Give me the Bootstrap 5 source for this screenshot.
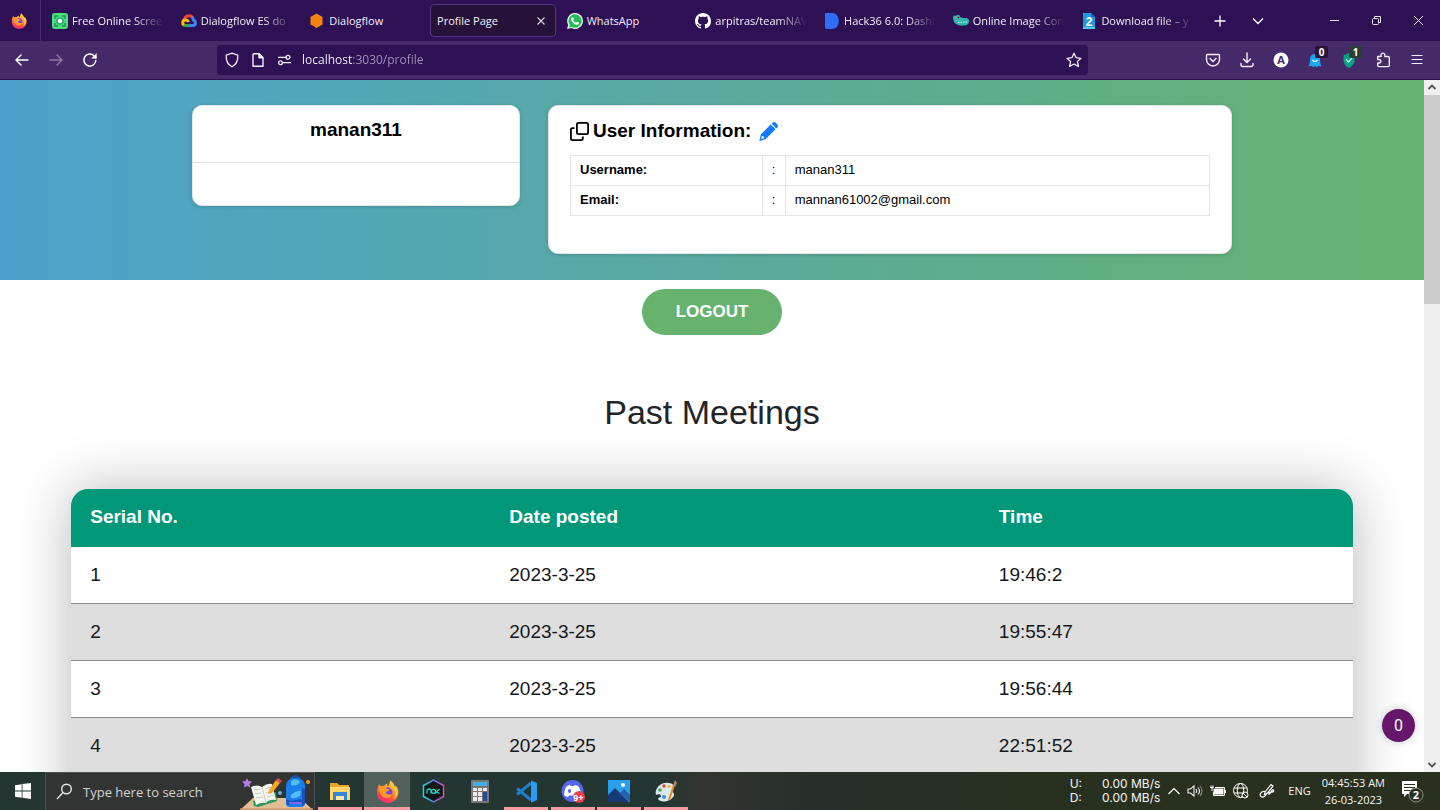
<!DOCTYPE html>
<html lang="en">
<head>
<meta charset="utf-8">
<meta name="viewport" content="width=device-width, initial-scale=1">
<title>Profile Page</title>
<link href="https://cdn.jsdelivr.net/npm/bootstrap@5.3.0/dist/css/bootstrap.min.css" rel="stylesheet">
<style>
  :root { --ui: "Open Sans", "Noto Sans", sans-serif; --page: "Liberation Sans", Arial, sans-serif; }
  body { font-family: var(--page); background: #fff; }
  svg { display: block; flex: none; }
  button { padding: 0; border: 0; background: none; color: inherit; }

  /* browser chrome */
  .tab-strip { height: 41px; background: #2e1155; color: #f3eef8; font: 11px/16px var(--ui); }
  .pinned { flex: none; width: 41px; padding-right: 3px; border-right: 1px solid #452a69; }
  .tab-list { flex: 0 1 1160px; min-width: 0; padding-left: 2px; }
  .tab { flex: 1 1 0; padding: 4px 2px 4px 1px; min-width: 0; }
  .tab-face { height: 33px; padding: 0 0 0 7px; gap: 4px; width: 100%; border: 1px solid transparent; border-radius: 4px; }
  .tab-face.active { background: #261238; border-color: #55348a; padding: 0 6px; }
  .tab-title { flex: 1 1 0; white-space: nowrap; text-align: left; }
  .faded { -webkit-mask-image: linear-gradient(90deg, #000 62px, transparent 92px); mask-image: linear-gradient(90deg, #000 62px, transparent 92px); }
  .window-buttons { gap: 31px; padding-right: 16px; }
  .toolbar { height: 39px; background: #452a69; color: #f3eef8; border-bottom: 1px solid #2e1155; }
  .nav-buttons { width: 217px; padding-left: 14px; gap: 18px; }
  .url-box { flex: 0 1 871px; height: 30px; margin-top: 4px; background: #2e1155; border-radius: 4px; padding: 0 6px 0 7px; gap: 10px; }
  .url-input { flex: 1 1 0; min-width: 0; border: 0; outline: 0; padding: 0; font: 12px/20px var(--ui); color: transparent;
    background: linear-gradient(90deg, #fbfaff 51px, #a594ba 51px); -webkit-background-clip: text; background-clip: text; }
  .tool-buttons { gap: 16px; padding-right: 14px; }
  .tool-buttons button { position: relative; }
  .count { position: absolute; top: -5px; right: -4px; width: 13px; height: 12px; border-radius: 2px; background: #2a1536; color: #fff; font: bold 10px/12px var(--ui); text-align: center; }
  .count.green { background: #293f36; }

  /* page */
  .viewport { flex: 1 1 0; min-height: 0; }
  .page { flex: 1 1 0; min-width: 0; overflow: hidden; position: relative; }
  .hero { min-height: 200px; padding: 25px 0; background: linear-gradient(90deg, #4ca2cd, #67b26f); }
  .hero .container-fluid { padding: 0 14px; }
  .hero .row { --bs-gutter-x: 28px; }
  .panel { background: #fff; border: 1px solid #e3e6e6; border-radius: 10px; box-shadow: 0 1px 4px rgba(0,0,0,.14); color: #000; }
  .panel h1, .panel h2 { font-size: 19px; line-height: 24px; font-weight: bold; margin: 0; }
  .name-head { height: 57px; padding-top: 12px; border-bottom: 1px solid #e4e5e6; }
  .name-body { height: 42px; }
  .info { height: 149px; padding: 13px 21px; }
  .info-table { font-size: 13px; line-height: 20px; margin: 12px 0 0; border-color: #e4e5e6; }
  .info-table > tbody > tr > * { padding: 4px 9px 5px; color: #000; }
  .logout { margin-top: 9px; width: 140px; height: 46px; border-radius: 23px; background: #67b26f; color: #fff; font-weight: bold; font-size: 17px; line-height: 24px; }
  .section-title { font-size: 34px; line-height: 40px; margin: 57px 0; color: #212529; font-weight: 400; }
  .meetings { width: 90%; margin: 0 auto; border-radius: 17px; overflow: hidden; box-shadow: 0 0 56px rgba(0,0,0,.28); font-size: 19px; line-height: 24px; color: #151719; border-collapse: collapse; background: #fff; table-layout: fixed; }
  .meetings th, .meetings td { padding: 16px 19px; }
  .meetings thead th { background: #009879; color: #fff; padding-bottom: 18px; }
  .meetings tbody tr { border-bottom: 1px solid #8c8c8c; }
  .meetings tbody tr:nth-child(even) { background: #dedede; }
  .meetings tbody tr:last-child td { padding-bottom: 96px; }
  .chat { position: absolute; right: 9px; bottom: 30px; width: 33px; height: 33px; border-radius: 50%; background: #66166b; color: #fff; font: 16px/33px Roboto, sans-serif; box-shadow: 0 0 8px rgba(0,0,0,.2); }
  .scroll-track { width: 16px; background: #f0f0f0; }
  .scroll-thumb { height: 209px; background: #cdcdcd; }

  /* taskbar */
  .taskbar { height: 38px; background: linear-gradient(90deg, #243632 46%, #33352f 49%, #243029 56%, #27301f 72%, #29301f); color: #f5f5f5; font-family: var(--ui); }
  .start { width: 45px; }
  .search { width: 270px; background: #323433; border: 1px solid #4a5150; border-bottom: 0; padding-left: 10px; gap: 10px; }
  .search input { flex: 1 1 0; min-width: 0; border: 0; outline: 0; padding: 0; background: none; font: 13px/20px var(--ui); color: #fff; }
  .search input::placeholder { color: #d2d2d2; opacity: 1; }
  .apps { padding-left: 2px; }
  .app { width: 46px; margin-right: 1px; border-bottom: 3px solid transparent; padding: 3px 0 0; display: flex; justify-content: center; align-items: center; }
  .apps .app:nth-child(2n) { margin-right: 0; }
  .app.open { border-image: linear-gradient(90deg, transparent 4px, #f79aa2 4px, #f79aa2 42px, transparent 42px) 3; }
  .app.current { background: #53615d; border-bottom-color: #f79aa2; }
  .tray { font-size: 11px; line-height: 14px; white-space: nowrap; }
  .tray-icons { gap: 7px; }
  .pen { margin: 0 13px 0 3px; }
  .speed { font: 12px/14px Inter, sans-serif; gap: 20px; }
  .clock { line-height: 17px; text-align: center; margin: 0 16px 0 11px; }
</style>
</head>
<body class="vh-100 d-flex flex-column overflow-hidden">

<svg width="0" height="0" class="position-absolute" aria-hidden="true">
  <defs>
    <linearGradient id="ffg" x1=".8" y1="0" x2=".3" y2="1"><stop offset="0" stop-color="#ffe14a"/><stop offset=".45" stop-color="#ff9328"/><stop offset=".8" stop-color="#ff3e50"/><stop offset="1" stop-color="#e6318a"/></linearGradient>
    <linearGradient id="nxg"><stop offset="0" stop-color="#24d8c4"/><stop offset=".6" stop-color="#6f6ae8"/><stop offset="1" stop-color="#e247a9"/></linearGradient>
  </defs>
  <symbol id="firefox" viewBox="0 0 24 24">
    <path fill="url(#ffg)" d="M3.500 4.500c.5 1.200 1.200 1.800 2 2 .8-.5 2-.6 3-.5C9.800 4.700 11 4 12 4c-.5 1-.3 2 .5 2.500C14 5 14.500 2.500 14.600.5c2.900 1.500 4.400 4 4.900 6.200.7.200 1-.4 1-1 2 2.300 3 5 2.900 7.600C23.200 19.300 18.300 24 12.200 24 5.800 24 1 19 1 12.900c0-3.200.8-6.100 2.500-8.400z"/>
    <circle cx="12" cy="13" r="5.200" fill="#7a49d6"/>
    <path fill="#ff9a2b" d="M3 8c3-1.800 6-1 7.500.6 1 .9 2.500.8 3.500 1.100-.3 1.600-2.100 1.800-3.200 2.700-.7.600-.4 1.700.5 2.300 2 1.200 4-.4 5.500.4-1 3-4.500 4.300-7.800 3.100C5 16.800 3.300 12.500 3 8z"/>
    <path fill="#ffcf3d" d="M15 2c.5 3 4.500 5.500 5.300 9.500.7 3.400-.6 6.500-2.300 8 4.500-1.500 5.800-8.500 2.700-12.500l-1.200 1C18.500 5.500 16.800 3.500 15 2z"/>
  </symbol>
</svg>

<header>
  <div class="tab-strip d-flex">
    <button class="pinned d-flex align-items-center justify-content-center" aria-label="Firefox View"><svg width="16" height="16"><use href="#firefox"/></svg></button>
    <div class="tab-list d-flex" role="tablist">
      <div class="tab"><button role="tab" class="tab-face d-flex align-items-center"><svg width="16" height="16" viewBox="0 0 16 16"><rect width="16" height="16" rx="3" fill="#4ae07e"/><path d="M3 6V3h3M10 3h3v3M13 10v3h-3M6 13H3v-3" fill="none" stroke="#1b9350" stroke-width="1.400"/><circle cx="8" cy="8" r="3.800" fill="#2da861"/><circle cx="8" cy="8" r="2.300" fill="#fff"/></svg><span class="tab-title faded">Free Online Scree</span></button></div>
      <div class="tab"><button role="tab" class="tab-face d-flex align-items-center"><svg width="16" height="16" viewBox="0 0 16 16" fill="none" stroke-width="3"><path d="M3.300 6.500C4 3.700 6 2.800 8 2.800c1.500 0 2.800.7 3.600 1.700" stroke="#ea4335"/><path d="M11 4c1 1 1.400 2 1.500 3.200 2.600.8 2.600 5.300-.5 5.300H8" stroke="#4285f4"/><path d="M8.500 12.500H4.500c-1 0-1.500-.3-2-.8" stroke="#34a853"/><path d="M3 12C1 10.500 1.200 7 4.500 7c1.600 0 2.500.8 3 2" stroke="#fbbc05"/></svg><span class="tab-title faded">Dialogflow ES do</span></button></div>
      <div class="tab"><button role="tab" class="tab-face d-flex align-items-center"><svg width="16" height="16" viewBox="0 0 16 16"><path fill="#f58410" d="M7.500 0.500L13.500 4v7.500L7.500 15v.5L5.500 13.500 1.500 11.500V4z"/></svg><span class="tab-title">Dialogflow</span></button></div>
      <div class="tab"><div class="tab-face active d-flex align-items-center"><button role="tab" aria-selected="true" class="tab-title">Profile Page</button><button aria-label="Close tab"><svg width="16" height="16" viewBox="0 0 16 16" stroke="#ddd4e8" stroke-width="1.100"><path d="M4.500 4.500l7 7M11.500 4.500l-7 7"/></svg></button></div></div>
      <div class="tab"><button role="tab" class="tab-face d-flex align-items-center"><svg width="16" height="16" viewBox="0 0 16 16"><path fill="#e9f5ec" d="M8 0a8 8 0 1 1-3.700 15.100L0 16l1.200-4A8 8 0 0 1 8 0z"/><path fill="#20bd58" d="M8 1.300a6.700 6.700 0 1 1-3.400 12.500l-2.600.6.800-2.500A6.700 6.700 0 0 1 8 1.300z"/><path fill="#fff" d="M5.300 4.200h.9l.8 2-.8 1.100c.7 1.200 1.500 1.900 2.800 2.500l1-1.100 1.900.9c.2 1.600-1.100 2.400-2.200 2.200C6.900 11.300 4.800 9 4.200 6.700c-.2-1 .3-2.100 1.100-2.500z"/></svg><span class="tab-title">WhatsApp</span></button></div>
      <div class="tab"><button role="tab" class="tab-face d-flex align-items-center"><svg width="16" height="16" viewBox="0 0 16 16" fill="#fff"><path d="M8 0C3.580 0 0 3.580 0 8c0 3.540 2.290 6.530 5.470 7.590.4.070.55-.17.55-.38 0-.19-.01-.82-.01-1.490-2.010.37-2.530-.49-2.690-.94-.09-.23-.48-.94-.82-1.130-.28-.15-.68-.52-.01-.53.63-.01 1.080.58 1.230.82.72 1.210 1.870.87 2.330.66.070-.52.28-.87.510-1.070-1.780-.2-3.640-.89-3.640-3.950 0-.87.31-1.590.82-2.150-.08-.2-.36-1.020.08-2.120 0 0 .67-.21 2.200.82.640-.18 1.320-.27 2-.27s1.360.09 2 .27c1.530-1.040 2.200-.82 2.200-.82.440 1.100.16 1.920.08 2.120.51.56.82 1.270.82 2.150 0 3.070-1.870 3.750-3.650 3.950.29.25.54.73.54 1.480 0 1.070-.01 1.930-.01 2.200 0 .21.15.46.55.38A8 8 0 0 0 16 8c0-4.420-3.580-8-8-8z"/></svg><span class="tab-title faded">arpitras/teamNAV</span></button></div>
      <div class="tab"><button role="tab" class="tab-face d-flex align-items-center"><svg width="16" height="16" viewBox="0 0 16 16"><path fill="#2f6df6" d="M1 0h7c9 0 9 16 0 16H3q-2 0-2-2z"/></svg><span class="tab-title faded">Hack36 6.0: Dashb</span></button></div>
      <div class="tab"><button role="tab" class="tab-face d-flex align-items-center"><svg width="16" height="16" viewBox="0 0 16 16"><path fill="#30b6ae" d="M0 4.500C0 2 2 2 3 3c1-2 4-1.500 4 1 2 1 4 1 6 1 3 0 4 4 2 6-2 2-8 2-12 0C1 10 0 7 0 4.500z"/><path d="M5 9.500l9-.6" stroke="#d7f6f0" stroke-dasharray="1.500 1"/><circle cx="3" cy="4.200" r="1" fill="#e96a73"/><circle cx="5.500" cy="4.500" r=".8" fill="#123"/></svg><span class="tab-title faded">Online Image Con</span></button></div>
      <div class="tab"><button role="tab" class="tab-face d-flex align-items-center"><svg width="16" height="16" viewBox="0 0 16 16"><path fill="#1b9adf" d="M2 0h8l4 4v12H2z"/><path fill="#1765b8" d="M10 0v4h4z"/><path fill="#58c9f2" d="M2 14h12v2H2z"/><text x="8" y="12.500" text-anchor="middle" font-size="12" font-weight="bold" fill="#fff" font-family="Liberation Sans">2</text></svg><span class="tab-title faded">Download file – y</span></button></div>
    </div>
    <div class="d-flex align-items-center gap-4 ps-2 ms-1">
      <button aria-label="New tab"><svg width="14" height="14" viewBox="0 0 14 14" stroke="#fff" stroke-width="1.300"><path d="M7 1.500v11M1.500 7h11"/></svg></button>
      <button aria-label="List all tabs"><svg width="14" height="14" viewBox="0 0 14 14" fill="none" stroke="#fff" stroke-width="1.300"><path d="M2 4.500l5 5 5-5"/></svg></button>
    </div>
    <div class="window-buttons d-flex align-items-center ms-auto">
      <button aria-label="Minimize"><svg width="11" height="11" viewBox="0 0 11 11" stroke="#e8e2ef"><path d="M1 5.500h9"/></svg></button>
      <button aria-label="Restore"><svg width="11" height="11" viewBox="0 0 11 11" fill="none" stroke="#e8e2ef"><rect x="1.500" y="3.500" width="6" height="6" rx="1"/><path d="M3.500 3V1.500h6v6H8"/></svg></button>
      <button aria-label="Close"><svg width="11" height="11" viewBox="0 0 11 11" stroke="#e8e2ef"><path d="M1 1l9 9M10 1l-9 9"/></svg></button>
    </div>
  </div>

  <div class="toolbar d-flex">
    <div class="nav-buttons d-flex align-items-center">
      <button aria-label="Back"><svg width="16" height="16" viewBox="0 0 16 16" fill="none" stroke="#fff" stroke-width="1.400" stroke-linecap="round"><path d="M7 3L2 8l5 5M2 8h12"/></svg></button>
      <button aria-label="Forward"><svg width="16" height="16" viewBox="0 0 16 16" fill="none" stroke="#8d7ca4" stroke-width="1.400" stroke-linecap="round"><path d="M9 3l5 5-5 5M14 8H2"/></svg></button>
      <button aria-label="Reload"><svg width="16" height="16" viewBox="0 0 16 16" fill="none" stroke="#fff" stroke-width="1.500" stroke-linecap="round"><path d="M13.800 8.500a6 6 0 1 1-1.700-4.700L14 5.500"/><path d="M14.300 2v4.200h-4.200z" fill="#fff" stroke-width=".6"/></svg></button>
    </div>
    <div class="url-box d-flex align-items-center">
      <svg width="16" height="16" viewBox="0 0 16 16" fill="none" stroke="#f3eef8" stroke-width="1.300"><path d="M8 1.200l5.800 2c.3 5-1 9-5.800 11.600C3.200 12.200 1.900 8.200 2.200 3.200z"/></svg>
      <svg width="16" height="16" viewBox="0 0 16 16" fill="none" stroke="#f3eef8" stroke-width="1.400" stroke-linejoin="round"><path d="M4 1.700h5l4 4v8.600H3V2.700q0-1 1-1z"/><path d="M9 1.700v4h4z" fill="#f3eef8"/></svg>
      <svg width="16" height="16" viewBox="0 0 16 16" fill="none" stroke="#f3eef8" stroke-width="1.300"><path d="M2 5.300h8M6.500 10.700H15"/><circle cx="12" cy="5.300" r="1.900"/><circle cx="4.500" cy="10.700" r="1.900"/></svg>
      <input class="url-input" type="text" aria-label="Address" value="localhost:3030/profile">
      <button aria-label="Bookmark"><svg width="16" height="16" viewBox="0 0 16 16" fill="none" stroke="#f3eef8" stroke-width="1.300" stroke-linejoin="round"><path d="M8 1.200l2.100 4.500 4.900.6-3.600 3.300 1 4.900L8 12l-4.400 2.500 1-4.900L1 6.300l4.900-.6z"/></svg></button>
    </div>
    <div class="tool-buttons d-flex align-items-center ms-auto">
      <button aria-label="Pocket"><svg width="18" height="18" viewBox="0 0 18 18" fill="none" stroke="#f3eef8" stroke-width="1.400" stroke-linecap="round" stroke-linejoin="round"><path d="M3.500 3.500h11q1 0 1 1V8.500a6.500 6.500 0 0 1-13 0v-4q0-1 1-1z"/><path d="M6 7.500l3 3 3-3"/></svg></button>
      <button aria-label="Downloads"><svg width="18" height="18" viewBox="0 0 18 18" fill="none" stroke="#f3eef8" stroke-width="1.400" stroke-linecap="round"><path d="M9 2v9M5.500 8L9 11.500 12.500 8M3 12.500v1q0 2 2 2h8q2 0 2-2v-1"/></svg></button>
      <button aria-label="Account"><svg width="18" height="18" viewBox="0 0 18 18"><circle cx="9" cy="9" r="7.500" fill="#fff"/><text x="9" y="13" text-anchor="middle" font-size="11" font-weight="bold" fill="#452a69" font-family="Open Sans">A</text></svg></button>
      <button aria-label="Ghostery"><svg width="18" height="18" viewBox="0 0 18 18"><path fill="#18a8f2" d="M9 3c3.500 0 5 2.500 5 5 0 3 .5 5 1.500 7.500l-3-.7-1.700 1.500L9 15l-1.800 1.300-1.700-1.500-3 .7C3.500 13 4 11 4 8c0-2.500 1.500-5 5-5z"/><path d="M6.500 9q2.500 3 5 0" fill="none" stroke="#fff" stroke-width="1.200"/></svg><span class="count">0</span></button>
      <button aria-label="Tracker shield"><svg width="18" height="18" viewBox="0 0 18 18"><path fill="#0aa086" d="M9 2l5.500 2.500v5c0 3.500-2.500 6-5.500 7.500-3-1.500-5.500-4-5.500-7.500v-5z"/><path d="M6 8.500l2.500 2.500L12 7" fill="none" stroke="#c4f2e4" stroke-width="1.300"/></svg><span class="count green">1</span></button>
      <button aria-label="Extensions"><svg width="18" height="18" viewBox="0 0 18 18" fill="none" stroke="#f3eef8" stroke-width="1.400" stroke-linejoin="round"><path d="M7 5.500V4a1.900 1.900 0 0 1 3.800 0v1.500h3.200q1.300 0 1.300 1.300v7.500q0 1.300-1.300 1.300H5q-1.300 0-1.300-1.300V12h1.500a1.700 1.700 0 0 0 0-3.400H3.700V5.500z"/></svg></button>
      <button aria-label="Menu"><svg width="18" height="18" viewBox="0 0 18 18" stroke="#f3eef8" stroke-width="1.200" stroke-linecap="round"><path d="M4 4.500h10M4 8.500h10M4 12.500h10"/></svg></button>
    </div>
  </div>
</header>

<div class="viewport d-flex">
  <main class="page">
    <section class="hero">
      <div class="container-fluid w-75">
        <div class="row">
          <div class="col-4">
            <div class="panel">
              <div class="name-head text-center"><h1>manan311</h1></div>
              <div class="name-body"></div>
            </div>
          </div>
          <div class="col-8">
            <div class="panel info">
              <h2 class="d-flex align-items-center gap-1">
                <svg width="19" height="19" viewBox="0 0 19 19" fill="none" stroke="#000" stroke-width="1.800"><rect x="6.900" y=".9" width="11.200" height="11.200" rx="1.600"/><path d="M4.500 6.200H2.500q-1.600 0-1.600 1.600v8.700q0 1.600 1.600 1.600h8.700q1.600 0 1.600-1.600v-2"/></svg>
                <span>User Information:</span>
                <a href="#edit" class="ms-1" aria-label="Edit user information"><svg width="19" height="19" viewBox="0 0 19 19" fill="#147bff"><path d="M12.600 1.600l1-1c.8-.8 2-.8 2.800 0l2 2c.8.8.8 2 0 2.800l-1 1z"/><path d="M11.700 2.500l4.800 4.800L6.600 17.200.3 18.900 1.900 12.300zM2.900 14l-.9 3.100 3.200-.9-.4-1.700z" fill-rule="evenodd"/></svg></a>
              </h2>
              <table class="table table-bordered info-table">
                <colgroup><col style="width:30%"><col style="width:23px"><col></colgroup>
                <tbody>
                  <tr><th scope="row">Username:</th><td>:</td><td>manan311</td></tr>
                  <tr><th scope="row">Email:</th><td>:</td><td>mannan61002@gmail.com</td></tr>
                </tbody>
              </table>
            </div>
          </div>
        </div>
      </div>
    </section>

    <div class="text-center"><button class="logout">LOGOUT</button></div>
    <h2 class="section-title text-center">Past Meetings</h2>

    <table class="meetings">
      <colgroup><col style="width:32.7%"><col style="width:38.2%"><col></colgroup>
      <thead><tr><th scope="col">Serial No.</th><th scope="col">Date posted</th><th scope="col">Time</th></tr></thead>
      <tbody>
        <tr><td>1</td><td>2023-3-25</td><td>19:46:2</td></tr>
        <tr><td>2</td><td>2023-3-25</td><td>19:55:47</td></tr>
        <tr><td>3</td><td>2023-3-25</td><td>19:56:44</td></tr>
        <tr><td>4</td><td>2023-3-25</td><td>22:51:52</td></tr>
      </tbody>
    </table>
    <button class="chat">0</button>
  </main>
  <div class="scroll-track d-flex flex-column" aria-hidden="true">
    <svg width="16" height="15" viewBox="0 0 16 15" fill="none" stroke="#555" stroke-width="1.800"><path d="M4.500 9L8 5.500 11.500 9"/></svg>
    <div class="scroll-thumb"></div>
    <svg class="mt-auto" width="16" height="15" viewBox="0 0 16 15" fill="none" stroke="#555" stroke-width="1.800"><path d="M4.500 6L8 9.500 11.500 6"/></svg>
  </div>
</div>

<footer class="taskbar d-flex">
  <button class="start d-flex align-items-center justify-content-center" aria-label="Start"><svg width="16" height="16" viewBox="0 0 16 16" fill="#fff"><path d="M0 2.200l6.700-1v6.400H0zM7.500 1.100L16 0v7.600H7.500zM0 8.400h6.700v6.400l-6.700-1zM7.500 8.400H16V16l-8.500-1.200z"/></svg></button>
  <div class="search d-flex align-items-center">
    <svg width="17" height="17" viewBox="0 0 17 17" fill="none" stroke="#e8e8e8" stroke-width="1.400"><circle cx="10.500" cy="6" r="4.800"/><path d="M7 9.500L1 16"/></svg>
    <input type="search" aria-label="Search" placeholder="Type here to search">
    <svg class="align-self-end" width="74" height="36" viewBox="0 0 74 36">
      <path fill="#e3bd94" d="M0 36L13 24h47l13 12z"/><path fill="#c8966c" d="M0 34.500h73V36H0z"/>
      <path fill="#b47bea" d="M7 4l1.500 3L12 7.500 9.500 10l.8 3.500L7 12l-3 1.500.5-3.500L2 7.500 5.500 7z"/>
      <path fill="#2c9561" d="M14 32l-1-5 23-9 1 9-19 6z"/><path fill="#f4f4ef" d="M11 13q7-3 11 0 5-4 10-3l4 16q-7-1-10 3-5-1-10 2z"/><path fill="none" stroke="#a9aeab" stroke-width=".6" d="M22 13l4 16M14 16l6-1M15 20l6-1M16 24l7-1M25 15l6-2M26 19l6-2M27 23l7-2"/>
      <path fill="#f6a623" d="M36 6l4 3-8 10-4 1 1-4z"/><path fill="#e94958" d="M36 6l2-2 4 3-2 2z"/>
      <circle cx="40" cy="19" r="2" fill="#59b7dc"/><circle cx="68" cy="8" r="2" fill="#f59c2d"/>
      <path fill="none" stroke="#1857b8" stroke-width="2" d="M51 5q4-6 9 0"/><path fill="#1c7eed" d="M46 12c0-11 19-11 19 0v17q0 4-4 4H50q-4 0-4-4z"/><path fill="#52bdf7" d="M51 7q5-4 9 1-3 5-9 3zM51 21q6-5 10-4l-1 5q-5 3-9 2z"/><path fill="#1554bd" d="M62 14l3 1v15l-3 2zM46 25l5 2 10-2 1 3-15 3z"/><path stroke="#a06af0" stroke-width="1.500" d="M49 29h12"/>
    </svg>
  </div>
  <nav class="apps d-flex" aria-label="Taskbar apps">
    <button class="app open" aria-label="File Explorer"><svg width="22" height="22" viewBox="0 0 22 22"><path fill="#e9a62a" d="M1 3h7l2 2h10v5H1z"/><path fill="#ffd667" d="M1 7h20v13H1z"/><path fill="#3585d8" d="M4 12h14v8h-3v-4H7v4H4z"/><path fill="#ffe8a6" d="M7 16h8v4H7z"/></svg></button>
    <button class="app current" aria-label="Firefox"><svg width="23" height="23"><use href="#firefox"/></svg></button>
    <button class="app" aria-label="Nox"><svg width="23" height="24" viewBox="0 0 23 24"><path d="M11.500 1l10 5.500v11l-10 5.500-10-5.500v-11z" fill="#111719" stroke="url(#nxg)" stroke-width="1.500"/><path d="M5 14.500v-3.500q2.200-2 4 0v3.500M13 12l4.500 2.500M17.500 10L13 14.500" fill="none" stroke="#22d3bc" stroke-width="1.300"/><circle cx="11.500" cy="12.300" r="2" fill="none" stroke="#22d3bc" stroke-width="1.200"/></svg></button>
    <button class="app" aria-label="Calculator"><svg width="18" height="24" viewBox="0 0 18 24"><rect width="18" height="23" y="1" rx="1" fill="#777"/><path fill="#45aee9" d="M2 3h14v4H2z"/><path fill="#ececec" d="M2 9h4v3H2zM7 9h4v3H7zM12 9h4v3h-4zM2 13h4v4H2zM7 13h4v4H7zM2 18h4v4H2zM7 18h4v4H7z"/><path fill="#1d4f9e" d="M12 13h4v9h-4z"/></svg></button>
    <button class="app open" aria-label="Visual Studio Code"><svg width="23" height="23" viewBox="0 0 23 23"><path d="M2 8.500L16 20M2 14.500L16 3" stroke="#1d7fcc" stroke-width="3"/><path fill="#2a9df0" d="M16 .5L22 3v17l-6 2.500z"/></svg></button>
    <button class="app open" aria-label="Discord"><svg width="24" height="24" viewBox="0 0 24 24"><circle cx="11.500" cy="12" r="11" fill="#5568ea"/><path fill="#fff" d="M5 8q2-2 4-2l.8 1h3.400L14 6q2 0 4 2 2 4 2 8-2 2-4 2l-1.200-1.500H8.200L7 18q-2 0-4-2 0-4 2-8z"/><ellipse cx="8.500" cy="12" rx="1.600" ry="1.900" fill="#5568ea"/><circle cx="18" cy="18" r="6" fill="#e8404c"/><text x="17.500" y="21.500" text-anchor="middle" font-size="9" font-weight="bold" fill="#fff" font-family="Liberation Sans">9+</text></svg></button>
    <button class="app open" aria-label="Photos"><svg width="22" height="22" viewBox="0 0 22 22"><path fill="#2aa0ed" d="M0 0h22v22H0z"/><path fill="#163b78" d="M0 15l7-7 14 14H0z"/><path fill="#245fb2" d="M12 13l4-4 6 6v7z"/><circle cx="15" cy="5" r="2" fill="#fff"/></svg></button>
    <button class="app open" aria-label="Paint"><svg width="24" height="24" viewBox="0 0 24 24"><path fill="#dce9ee" d="M2 16C0 9 8 2 15 4c7 1 5 5 4 7-1 3 3 4 0 7-3 5-13 6-15 2 0-2 3-1 3-3s-3-2-5-1z"/><circle cx="6" cy="11" r="1.800" fill="#42a655"/><circle cx="10" cy="7" r="1.800" fill="#e34a3f"/><circle cx="15" cy="7.500" r="1.600" fill="#f0b52e"/><circle cx="10" cy="18" r="2" fill="#3c8ee1"/><path d="M20 6l-5 15" stroke="#e28a25" stroke-width="2"/><path d="M21 1l2 3-2 4-2-1z" fill="#b78158"/></svg></button>
  </nav>
  <div class="tray d-flex align-items-center ms-auto">
    <div class="speed d-flex"><div>U:<br>D:</div><div>0.00 MB/s<br>0.00 MB/s</div></div>
    <div class="tray-icons d-flex align-items-center ms-2">
      <button aria-label="Show hidden icons"><svg width="12" height="12" viewBox="0 0 12 12" fill="none" stroke="#fff" stroke-width="1.200"><path d="M.5 9L6 3.500 11.500 9"/></svg></button>
      <button aria-label="Volume"><svg width="16" height="16" viewBox="0 0 16 16" fill="none" stroke="#eee" stroke-width="1.100"><path d="M1 6h2.500L7 3v10l-3.500-3H1zM9 6q1.500 2 0 4M11 4.500q3 3.500 0 7"/><path d="M13 3q4 5 0 10" stroke="#889087"/></svg></button>
      <button aria-label="Battery"><svg width="16" height="16" viewBox="0 0 16 16"><path d="M3.500 5.500h10v6h-10z" fill="#fff"/><path d="M5 4.500h9.500v8h-11V9M15.500 7v3" fill="none" stroke="#fff"/><path d="M0 4.500h3.500M1 2.500v2M3 2.500v2M2 5v3" stroke="#fff"/></svg></button>
      <button aria-label="Network"><svg width="16" height="16" viewBox="0 0 16 16" fill="none" stroke="#fff"><circle cx="7.500" cy="7.500" r="7"/><ellipse cx="7.500" cy="7.500" rx="3.200" ry="7"/><path d="M1 5h13M1 10h13"/><circle cx="12" cy="12" r="3" fill="#29301f"/><path d="M10 10l4 4"/></svg></button>
      <button class="pen" aria-label="Pen"><svg width="16" height="16" viewBox="0 0 16 16" fill="none" stroke="#fff" stroke-width="1.200"><path d="M6 9l6-7.500 2 1.500-6 7.500-2.500 1zM6 8.500c-4-.5-6 3-4 5 3 2 5-1.500 6-3.500 2-1 5 0 6.500-1.500 1-2-1.500-2-2-.5-.5 2-2 2.500-3 3.500"/></svg></button>
    </div>
    <span>ENG</span>
    <div class="clock">04:45:53 AM<br>26-03-2023</div>
    <button class="me-3" aria-label="2 notifications"><svg width="23" height="24" viewBox="0 0 23 24"><path fill="#fff" d="M1 2h15v13H6l-3 3v-3H1z"/><path d="M3 5.500h11M3 8.500h11M3 11.500h7" stroke="#29301f"/><circle cx="15" cy="16" r="7" fill="#29301f" stroke="#8b9088"/><text x="15" y="20" text-anchor="middle" font-size="11" font-weight="bold" fill="#fff" font-family="Open Sans">2</text></svg></button>
  </div>
</footer>
<script src="https://cdn.jsdelivr.net/npm/bootstrap@5.3.0/dist/js/bootstrap.bundle.min.js"></script>
</body>
</html>
